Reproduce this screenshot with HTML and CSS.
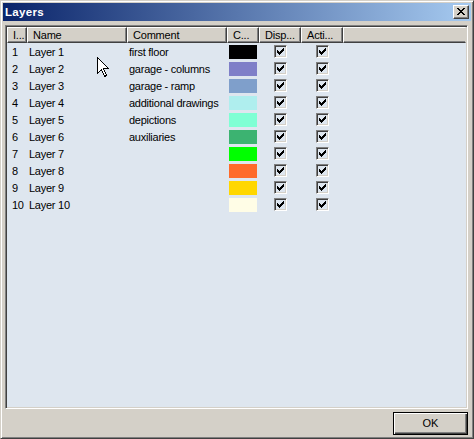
FILE: index.html
```html
<!DOCTYPE html>
<html>
<head>
<meta charset="utf-8">
<link rel="stylesheet" href="styles.css">
</head>
<body>
<div class="window">
  <div class="titlebar">
    <span class="title">Layers</span>
    <span class="closebtn">
      <svg width="8" height="7" viewBox="0 0 8 7" shape-rendering="crispEdges">
        <path d="M0 0h2v1h-2z M6 0h2v1h-2z M1 1h2v1h-2z M5 1h2v1h-2z M2 2h4v1h-4z M3 3h2v1h-2z M2 4h4v1h-4z M1 5h2v1h-2z M5 5h2v1h-2z M0 6h2v1h-2z M6 6h2v1h-2z" fill="#000"/>
      </svg>
    </span>
  </div>
  <div class="content">
    <div class="list">
      <div class="row header">
        <div class="hcell">I...</div>
        <div class="hcell">Name</div>
        <div class="hcell">Comment</div>
        <div class="hcell">C...</div>
        <div class="hcell">Disp...</div>
        <div class="hcell">Acti...</div>
        <div class="hcell filler"></div>
      </div>
      <div class="rows">
        <div class="row item"><div class="c-id">1</div><div class="c-txt">Layer 1</div><div class="c-txt">first floor</div><div class="c-col"><span class="swatch" style="background:#000000"></span></div><div class="c-chk"><span class="chk"></span></div><div class="c-chk"><span class="chk"></span></div></div>
        <div class="row item"><div class="c-id">2</div><div class="c-txt">Layer 2</div><div class="c-txt">garage - columns</div><div class="c-col"><span class="swatch" style="background:#7f7fc8"></span></div><div class="c-chk"><span class="chk"></span></div><div class="c-chk"><span class="chk"></span></div></div>
        <div class="row item"><div class="c-id">3</div><div class="c-txt">Layer 3</div><div class="c-txt">garage - ramp</div><div class="c-col"><span class="swatch" style="background:#7f9fcb"></span></div><div class="c-chk"><span class="chk"></span></div><div class="c-chk"><span class="chk"></span></div></div>
        <div class="row item"><div class="c-id">4</div><div class="c-txt">Layer 4</div><div class="c-txt">additional drawings</div><div class="c-col"><span class="swatch" style="background:#afeeee"></span></div><div class="c-chk"><span class="chk"></span></div><div class="c-chk"><span class="chk"></span></div></div>
        <div class="row item"><div class="c-id">5</div><div class="c-txt">Layer 5</div><div class="c-txt">depictions</div><div class="c-col"><span class="swatch" style="background:#7fffd4"></span></div><div class="c-chk"><span class="chk"></span></div><div class="c-chk"><span class="chk"></span></div></div>
        <div class="row item"><div class="c-id">6</div><div class="c-txt">Layer 6</div><div class="c-txt">auxiliaries</div><div class="c-col"><span class="swatch" style="background:#3cb371"></span></div><div class="c-chk"><span class="chk"></span></div><div class="c-chk"><span class="chk"></span></div></div>
        <div class="row item"><div class="c-id">7</div><div class="c-txt">Layer 7</div><div class="c-txt"></div><div class="c-col"><span class="swatch" style="background:#00ff00"></span></div><div class="c-chk"><span class="chk"></span></div><div class="c-chk"><span class="chk"></span></div></div>
        <div class="row item"><div class="c-id">8</div><div class="c-txt">Layer 8</div><div class="c-txt"></div><div class="c-col"><span class="swatch" style="background:#ff6a2a"></span></div><div class="c-chk"><span class="chk"></span></div><div class="c-chk"><span class="chk"></span></div></div>
        <div class="row item"><div class="c-id">9</div><div class="c-txt">Layer 9</div><div class="c-txt"></div><div class="c-col"><span class="swatch" style="background:#ffd700"></span></div><div class="c-chk"><span class="chk"></span></div><div class="c-chk"><span class="chk"></span></div></div>
        <div class="row item"><div class="c-id">10</div><div class="c-txt">Layer 10</div><div class="c-txt"></div><div class="c-col"><span class="swatch" style="background:#fffde6"></span></div><div class="c-chk"><span class="chk"></span></div><div class="c-chk"><span class="chk"></span></div></div>
      </div>
    </div>
    <div class="footer">
      <button class="okbtn">OK</button>
    </div>
  </div>
  <svg class="cursor" width="13" height="21" viewBox="0 0 13 21" shape-rendering="crispEdges">
    <path d="M0.5 0.5 V16.5 L4.5 12.5 L7.5 19.5 L9.5 18.5 L6.5 11.5 H11.5 Z" fill="#fff" stroke="#000" stroke-width="1" stroke-linejoin="miter"/>
  </svg>
</div>
</body>
</html>
```

FILE: styles.css
```css
html, body {
  margin: 0;
  padding: 0;
  background: #d4d0c8;
}

.window {
  position: relative;
  width: 474px;
  height: 439px;
  box-sizing: border-box;
  background: #d4d0c8;
  border: 1px solid;
  border-color: #d4d0c8 #404040 #404040 #d4d0c8;
  box-shadow: inset 1px 1px #ffffff, inset -1px -1px #808080;
  padding: 2px;
  display: flex;
  flex-direction: column;
  font-family: "Liberation Sans", Arial, sans-serif;
  font-size: 11px;
  color: #000;
}

.titlebar {
  height: 18px;
  flex: 0 0 18px;
  background: linear-gradient(to right, #0a246a, #a6caf0);
  display: flex;
  align-items: center;
  justify-content: space-between;
  padding: 0 2px 0 2px;
}

.title {
  color: #fff;
  font-weight: bold;
  font-size: 11.5px;
  letter-spacing: 0.3px;
  line-height: 18px;
}

.closebtn {
  width: 16px;
  height: 14px;
  box-sizing: border-box;
  background: #d4d0c8;
  border: 1px solid;
  border-color: #ffffff #404040 #404040 #ffffff;
  box-shadow: inset -1px -1px #808080;
  display: flex;
  align-items: center;
  justify-content: center;
  padding-bottom: 1px;
}

.content {
  flex: 1;
  display: flex;
  flex-direction: column;
  padding: 4px 3px 0 2px;
}

.list {
  height: 384px;
  box-sizing: border-box;
  background: #dee6ef;
  border: 1px solid;
  border-color: #808080 #ffffff #ffffff #808080;
  box-shadow: inset 1px 1px #404040, inset -1px -1px #d4d0c8;
  padding: 1px;
  overflow: hidden;
}

.row {
  display: grid;
  grid-template-columns: 20px 100px 100px 32px 42px 42px 1fr;
}

.header {
  height: 16px;
}

.hcell {
  box-sizing: border-box;
  height: 16px;
  background: #d4d0c8;
  border: 1px solid;
  border-color: #ffffff #404040 #404040 #ffffff;
  box-shadow: inset -1px -1px #808080;
  padding-left: 5px;
  padding-top: 1px;
  line-height: 13px;
  white-space: nowrap;
  overflow: hidden;
  letter-spacing: -0.2px;
}

.hcell.filler {
  border-right-color: #d4d0c8;
  box-shadow: inset 0 -1px #808080;
}

.item {
  height: 17px;
  line-height: 17px;
  letter-spacing: -0.25px;
  white-space: nowrap;
}

.c-id {
  padding-left: 5px;
  padding-top: 1px;
  line-height: 16px;
}

.c-txt {
  padding-left: 2px;
  padding-top: 1px;
  line-height: 16px;
  overflow: hidden;
}

.c-col {
  padding: 2px 0 0 2px;
}

.swatch {
  display: block;
  width: 28px;
  height: 14px;
}

.c-chk {
  display: flex;
  justify-content: center;
  padding-top: 2px;
}

.chk {
  display: block;
  width: 13px;
  height: 13px;
  box-sizing: border-box;
  border: 1px solid;
  border-color: #808080 #ffffff #ffffff #808080;
  box-shadow: inset 1px 1px #404040, inset -1px -1px #d4d0c8;
  background-color: #dee6ef;
  background-image: url("data:image/svg+xml,%3Csvg xmlns='http://www.w3.org/2000/svg' width='7' height='7' shape-rendering='crispEdges'%3E%3Cpath d='M6 0h1v1h-1z M5 1h2v1h-2z M0 2h1v1h-1z M4 2h3v1h-3z M0 3h2v1h-2z M3 3h3v1h-3z M0 4h5v1h-5z M1 5h3v1h-3z M2 6h1v1h-1z' fill='%23000'/%3E%3C/svg%3E");
  background-repeat: no-repeat;
  background-position: 2px 2px;
}

.footer {
  display: flex;
  justify-content: flex-end;
  padding-top: 3px;
}

.okbtn {
  width: 75px;
  height: 23px;
  box-sizing: border-box;
  background: #d4d0c8;
  border: 1px solid #000;
  box-shadow: inset 1px 1px #ffffff, inset -1px -1px #404040, inset -2px -2px #808080;
  font-family: "Liberation Sans", Arial, sans-serif;
  font-size: 11px;
  color: #000;
  padding: 0 0 1px 0;
  margin: 0;
}

.cursor {
  position: absolute;
  left: 96px;
  top: 56px;
}
```
